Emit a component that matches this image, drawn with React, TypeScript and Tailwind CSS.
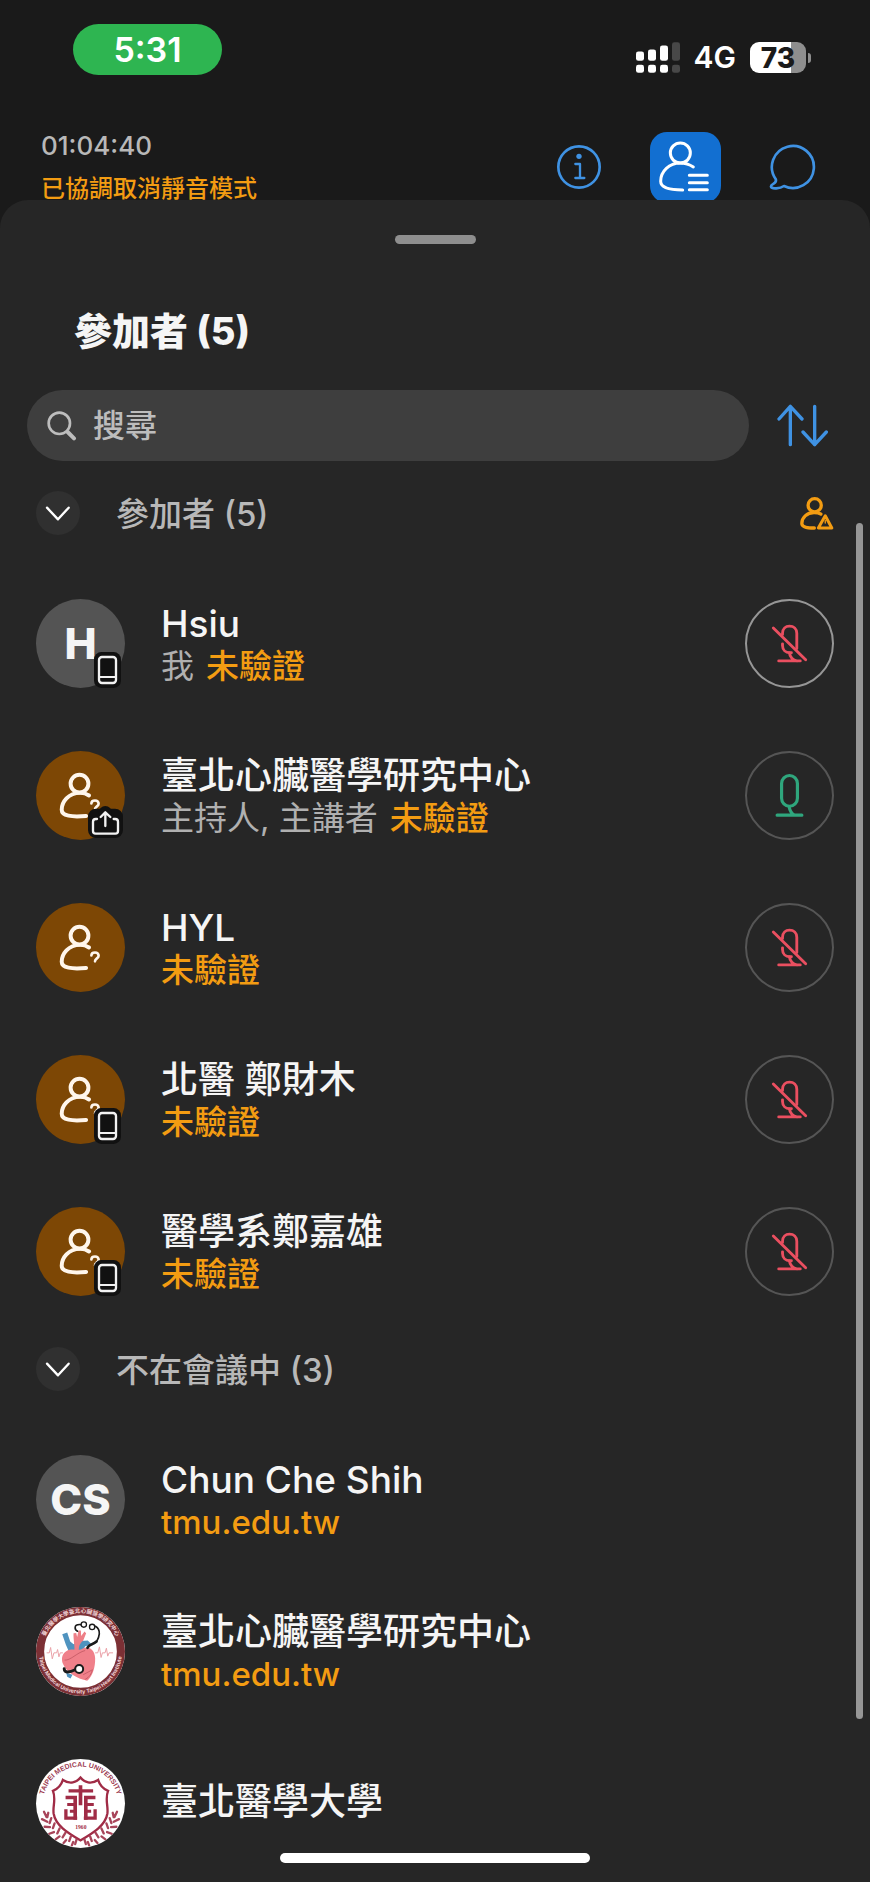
import type { ReactNode } from 'react';

type Badge = 'phone' | 'share';

type Person = {
  name: string;
  role?: string;
  tag?: string;
  avatar: ReactNode;
  badge?: Badge;
  mic?: 'muted' | 'on';
  self?: boolean;
};

const SignalIcon = () => (
  <svg viewBox="603 127 132 92" className="h-[31px] w-[44px]" fill="#fff">
    <rect x="603" y="155" width="24" height="28" rx="7" />
    <rect x="639" y="149" width="24" height="34" rx="7" />
    <rect x="675" y="137" width="24" height="46" rx="7" />
    <rect x="711" y="127" width="24" height="56" rx="7" fill="#484848" />
    <rect x="603" y="195" width="24" height="24" rx="7" />
    <rect x="639" y="195" width="24" height="24" rx="7" />
    <rect x="675" y="195" width="24" height="24" rx="7" />
    <rect x="711" y="195" width="24" height="24" rx="7" fill="#484848" />
  </svg>
);

const InfoIcon = () => (
  <svg viewBox="362 432 138 138" className="size-[46px]" fill="none" stroke="#3f92e3" strokeWidth="8" strokeLinecap="round" strokeLinejoin="round">
    <circle cx="431" cy="501" r="62" />
    <circle cx="431" cy="469" r="8" fill="#3f92e3" stroke="none" />
    <path d="M420 492h14v42M420 534h27" strokeWidth="7" />
  </svg>
);

const PeopleIcon = () => (
  <svg viewBox="0 0 213 213" className="size-full" fill="none" stroke="#fff" strokeWidth="9" strokeLinecap="round">
    <circle cx="91" cy="63" r="30" />
    <path d="M130 105C118 97 105 93 91 93C58 93 32 118 32 148C32 166 60 174 98 174" />
    <path d="M118 130h54M118 152h54M118 173h54" />
  </svg>
);

const ChatIcon = () => (
  <svg viewBox="1002 430 144 138" className="h-[46px] w-[48px]" fill="none" stroke="#3f92e3" strokeWidth="8" strokeLinejoin="round">
    <path d="M1047 556A63 63 0 1 0 1022 535C1028 551 1007 548 1008 558C1010 566 1035 564 1047 556Z" />
  </svg>
);

const SearchIcon = () => (
  <svg viewBox="141 423 90 90" className="size-[30px] shrink-0" fill="none" stroke="#bdbdbd" strokeLinecap="round">
    <circle cx="178" cy="460" r="32" strokeWidth="8" />
    <path d="M203 486L222 505" strokeWidth="12" />
  </svg>
);

const SortIcon = () => (
  <svg viewBox="1024 100 153 129" className="h-[43px] w-[51px]" fill="none" stroke="#3f92e3" strokeWidth="10" strokeLinecap="round" strokeLinejoin="round">
    <path d="M1064 222V107M1030 145L1064 107L1099 145" />
    <path d="M1137 107V222M1102 184L1137 222L1172 184" />
  </svg>
);

const WarnPersonIcon = () => (
  <svg viewBox="1096 377 102 100" className="h-[33px] w-[34px]" fill="none" stroke="#f39c12" strokeWidth="10" strokeLinecap="round" strokeLinejoin="round">
    <circle cx="1140" cy="402" r="20" />
    <path d="M1159 429C1153 425 1147 424 1138 424C1116 424 1101 440 1101 457C1101 468 1120 471 1139 471" />
    <path d="M1172 434L1192 471H1151Z" strokeWidth="9" />
    <path d="M1172 448v8" strokeWidth="4" />
  </svg>
);

const ChevronIcon = () => (
  <svg viewBox="0 0 132 132" className="size-full" fill="none" stroke="#fff" strokeWidth="7" strokeLinecap="round" strokeLinejoin="round">
    <path d="M33 50L66 85L98 50" />
  </svg>
);

const MutedMicIcon = () => (
  <svg viewBox="135 86 268 268" className="size-full" fill="none" stroke="#ea4f60" strokeWidth="9" strokeLinecap="round" strokeLinejoin="round">
    <path d="M247 192V188C247 173 257 165 269 165C282 165 292 174 292 188V236" />
    <path d="M247 221V226C247 240 257 249 270 249H275" />
    <path d="M269 250C270 262 280 273 292 275M235 275H303" />
    <path d="M218 171L320 271" />
  </svg>
);

const MicIcon = () => (
  <svg viewBox="135 542 268 268" className="size-full" fill="none" stroke="#2fa67d" strokeWidth="10" strokeLinecap="round" strokeLinejoin="round">
    <rect x="244" y="613" width="50" height="97" rx="25" />
    <path d="M268 712C270 724 276 733 285 738M230 738H308" />
  </svg>
);

const PhoneBadge = () => (
  <svg viewBox="0 0 81 108" className="absolute right-1 bottom-0 h-[36px] w-[27px]" fill="none">
    <rect width="81" height="108" rx="22" fill="#111" />
    <rect x="15" y="15" width="51" height="78" rx="9" stroke="#f2f2f2" strokeWidth="7" />
    <path d="M15 75H66" stroke="#f2f2f2" strokeWidth="6" />
  </svg>
);

const ShareBadge = () => (
  <svg viewBox="0 0 105 96" className="absolute right-0.5 bottom-0.5 h-[32px] w-[35px]" fill="none">
    <rect y="8" width="105" height="88" rx="24" fill="#111" />
    <circle cx="52" cy="20" r="20" fill="#111" />
    <g stroke="#f2f2f2" strokeWidth="7" strokeLinecap="round" strokeLinejoin="round">
      <path d="M27 39H23Q15 39 15 47V75Q15 83 23 83H82Q90 83 90 75V47Q90 39 82 39H77" />
      <path d="M52 60V20M38 33L52 19L67 33" />
    </g>
  </svg>
);

const Initials = ({ text }: { text: string }) => (
  <span className="flex size-full items-center justify-center rounded-full bg-[#545454] text-[43px] leading-none font-extrabold text-[#f5f5f5]">
    {text}
  </span>
);

const GuestAvatar = () => (
  <svg viewBox="0 0 270 270" className="size-full rounded-full bg-[#7d4705]" fill="none" stroke="#fff6ec" strokeWidth="12" strokeLinecap="round">
    <circle cx="132" cy="99" r="27" />
    <path d="M161 135C152 129 145 127 134 127C98 127 78 154 78 178C78 197 108 201 152 197" />
    <path d="M168 159C168 152 173 150 179 150C186 150 190 155 190 160C190 168 179 168 179 177" strokeWidth="8" />
  </svg>
);

const HeartAvatar = () => (
  <svg viewBox="48 50 268 268" className="size-full rounded-full bg-white" fill="none">
    <circle cx="182" cy="184" r="122" stroke="#7c3035" strokeWidth="25" />
    <path id="ring-top" d="M69 210A116 116 0 1 1 295 210" />
    <path id="ring-bottom" d="M60 158A125 125 0 1 0 304 158" />
    <g fontFamily="Inter, 'Noto Sans CJK TC', sans-serif" fontWeight="700" fill="#f0d3d5" textAnchor="middle">
      <text fontSize="17">
        <textPath href="#ring-top" startOffset="50%">臺北醫學大學臺北心臟醫學研究中心</textPath>
      </text>
      <text fontSize="16">
        <textPath href="#ring-bottom" startOffset="50%">Taipei Medical University Taipei Heart Institute</textPath>
      </text>
    </g>
    <path d="M80 188h8l4-16 5 34 5-18h8l3-10 4 22 4-12h8M226 188h8l5-18 5 32 4-14h8l4-14 4 24 4-10h12" stroke="#eaa2a8" strokeWidth="3" />
    <path d="M127 132L142 127L151 154L161 162L172 153L204 151L216 163L196 168L184 190L148 186L138 164Z" fill="#4f93bf" />
    <path d="M163 188C166 166 160 150 161 129L169 128L172 140L176 121H183L184 137L194 124L199 129L190 152C178 160 175 175 178 188Z" fill="#ee7f87" />
    <path d="M139 183C158 171 176 185 190 174C211 166 229 183 226 214C224 244 214 262 202 272C176 268 139 248 128 219C124 204 127 190 139 183Z" fill="#f0808a" />
    <path d="M134 210C153 211 170 188 196 181M190 254L216 240M196 268C209 262 216 250 218 238" stroke="#b84e5a" strokeWidth="2" />
    <path d="M139 248L158 254L152 265L142 260Z" fill="#4f93bf" />
    <g stroke="#1b1b1b" strokeLinecap="round">
      <path d="M183 103C160 101 164 118 173 123M227 108C246 119 238 142 230 155" strokeWidth="5" />
      <path d="M230 154C220 164 207 161 203 173" strokeWidth="8" />
      <path d="M133 236C133 250 151 246 166 239" strokeWidth="9" />
      <circle cx="192" cy="103" r="8" strokeWidth="4" fill="#fff" />
      <circle cx="217" cy="110" r="8" strokeWidth="4" fill="#fff" />
      <circle cx="178" cy="237" r="12" strokeWidth="6" fill="#fff" />
    </g>
  </svg>
);

const UniversityAvatar = () => (
  <svg viewBox="48 53 268 268" className="size-full rounded-full bg-white" fill="none">
    <path id="crest-top" d="M69 205A114 114 0 1 1 295 205" />
    <text fontSize="21" fontWeight="700" fontFamily="'Liberation Sans', sans-serif" fill="#9c3a50" textAnchor="middle">
      <textPath href="#crest-top" startOffset="50%">TAIPEI MEDICAL UNIVERSITY</textPath>
    </text>
    <path
      d="M182 109C170 124 150 130 129 116C124 132 114 143 99 149C109 173 98 194 101 217C107 254 145 276 182 298C219 276 257 254 263 217C266 194 255 173 265 149C250 143 240 132 235 116C214 130 194 124 182 109Z"
      stroke="#a02c46"
      strokeWidth="7"
    />
    {/* cross over the two facing halves of 北 */}
    <g stroke="#a02c46">
      <path d="M146 149H220" strokeWidth="10" />
      <path d="M182 132V192" strokeWidth="11" />
      <path d="M137 169H166V236M227 169H198V236" strokeWidth="11" />
      <path d="M142 190H166M222 190H198M150 210H166M198 210H214" strokeWidth="9" />
      <path d="M138 204V231H172M226 204V231H192" strokeWidth="10" />
    </g>
    <text x="183" y="265" fontSize="17" fontWeight="700" fontFamily="'Liberation Serif', serif" fill="#a02c46" textAnchor="middle">
      1960
    </text>
    <g stroke="#a8455a" strokeWidth="7" strokeLinecap="round">
      <path d="M72 212L80 228M66 234L82 242M74 257L90 258M88 278L102 273M107 295L119 286M131 306L139 297M156 313L160 303M85 215L82 228M94 231L89 246M104 247L99 261M119 262L112 277M137 275L128 289M153 286L148 300M170 296L166 309" />
      <path d="M292 212L284 228M298 234L282 242M290 257L274 258M276 278L262 273M257 295L245 286M233 306L225 297M208 313L204 303M279 215L282 228M270 231L275 246M260 247L265 261M245 262L252 277M227 275L236 289M211 286L216 300M194 296L198 309" />
    </g>
  </svg>
);

const attendees: Person[] = [
  { name: 'Hsiu', role: '我', tag: '未驗證', avatar: <Initials text="H" />, badge: 'phone', mic: 'muted', self: true },
  { name: '臺北心臟醫學研究中心', role: '主持人, 主講者', tag: '未驗證', avatar: <GuestAvatar />, badge: 'share', mic: 'on' },
  { name: 'HYL', tag: '未驗證', avatar: <GuestAvatar />, mic: 'muted' },
  { name: '北醫 鄭財木', tag: '未驗證', avatar: <GuestAvatar />, badge: 'phone', mic: 'muted' },
  { name: '醫學系鄭嘉雄', tag: '未驗證', avatar: <GuestAvatar />, badge: 'phone', mic: 'muted' },
];

const absentees: Person[] = [
  { name: 'Chun Che Shih', tag: 'tmu.edu.tw', avatar: <Initials text="CS" /> },
  { name: '臺北心臟醫學研究中心', tag: 'tmu.edu.tw', avatar: <HeartAvatar /> },
  { name: '臺北醫學大學', avatar: <UniversityAvatar /> },
];

const PersonRow = ({ person }: { person: Person }) => (
  <li className="flex h-[90px] items-center">
    <div className="relative size-[89px] shrink-0">
      {person.avatar}
      {person.badge === 'phone' && <PhoneBadge />}
      {person.badge === 'share' && <ShareBadge />}
    </div>
    <div className={`ml-9 min-w-0 flex-1 ${person.tag ? 'pt-1' : 'pb-1'}`}>
      <p className="truncate text-[37px] leading-[43px] font-medium text-[#f5f5f5]">{person.name}</p>
      {person.tag && (
        <p className="flex gap-3 text-[33px] leading-[43px]">
          {person.role && <span className="text-[#b0b0b0]">{person.role}</span>}
          <span className="font-medium text-[#f39c12]">{person.tag}</span>
        </p>
      )}
    </div>
    {person.mic && (
      <button
        type="button"
        aria-label={person.mic === 'on' ? '靜音' : '取消靜音'}
        className={`size-[89px] shrink-0 rounded-full border-2 ${person.self ? 'border-[#969696]' : 'border-[#555]'}`}
      >
        {person.mic === 'on' ? <MicIcon /> : <MutedMicIcon />}
      </button>
    )}
  </li>
);

const SectionHeader = ({ title, action }: { title: string; action?: ReactNode }) => (
  <div className="mb-[63px] flex h-11 items-center">
    <button type="button" aria-label={title} className="size-11 rounded-full bg-[#303030]">
      <ChevronIcon />
    </button>
    <h2 className="ml-9 flex-1 pt-0.5 text-[33px] leading-11 font-medium text-[#b8b8b8]">{title}</h2>
    {action}
  </div>
);

const App = () => {
  return (
    <div className="flex min-h-screen flex-col bg-[#1a1a1a] font-[Inter,'Noto_Sans_CJK_TC',sans-serif]">
      <div className="flex items-start justify-between pt-6 pr-[59px] pl-[73px]">
        <div className="flex h-[51px] w-[149px] items-center justify-center rounded-full bg-[#2eb551] text-[34px] font-semibold text-white">
          5:31
        </div>
        <div className="mt-[18px] flex h-[31px] items-center">
          <SignalIcon />
          <span className="mx-3.5 text-[30px] leading-[31px] font-semibold text-white">4G</span>
          <span className="flex h-[31px] w-[56px] items-center justify-center rounded-[9px] bg-linear-to-r from-white from-73% to-[#8e8e8e] to-73% text-[28px] leading-none font-extrabold text-[#1a1a1a]">
            73
          </span>
          <span className="ml-0.5 h-2.5 w-[3px] rounded-r-full bg-[#8e8e8e]" />
        </div>
      </div>

      <header className="mt-[57px] flex h-[68px] items-start justify-between pr-[53px] pl-[41px]">
        <div>
          <p className="text-[26px] leading-[28px] font-medium text-[#b8b8b8]">01:04:40</p>
          <p className="mt-[15px] text-[24px] leading-[28px] font-medium text-[#f39c12]">已協調取消靜音模式</p>
        </div>
        <nav className="flex items-start">
          <button type="button" aria-label="資訊" className="mt-3">
            <InfoIcon />
          </button>
          <button type="button" aria-label="參加者" className="ml-12 size-[71px] rounded-[17px] bg-[#126fd1]">
            <PeopleIcon />
          </button>
          <button type="button" aria-label="聊天" className="mt-3 ml-12">
            <ChatIcon />
          </button>
        </nav>
      </header>

      <main className="relative flex-1 rounded-t-[28px] bg-[#262626] pt-[35px]">
        <div className="mx-auto h-[9px] w-[81px] rounded-full bg-[#8e8e8e]" />

        <h1 className="mt-[65px] pl-[74px] text-[38px] leading-11 font-extrabold text-[#f5f5f5]">參加者 (5)</h1>

        <div className="mt-[37px] flex items-center pr-[42px] pl-[27px]">
          <label className="flex h-[71px] min-w-0 flex-1 items-center gap-4 rounded-full bg-[#3e3e3e] pr-6 pl-5">
            <SearchIcon />
            <input
              type="search"
              aria-label="搜尋"
              placeholder="搜尋"
              className="min-w-0 flex-1 bg-transparent text-[32px] leading-11 font-medium text-[#f5f5f5] outline-none placeholder:text-[#bdbdbd]"
            />
          </label>
          <button type="button" aria-label="排序" className="ml-7">
            <SortIcon />
          </button>
        </div>

        <section className="mt-[30px] px-9">
          <SectionHeader title="參加者 (5)" action={<WarnPersonIcon />} />
          <ul className="flex flex-col gap-[62px]">
            {attendees.map((person) => (
              <PersonRow key={person.name} person={person} />
            ))}
          </ul>
        </section>

        <section className="mt-[51px] px-9">
          <SectionHeader title="不在會議中 (3)" />
          <ul className="flex flex-col gap-[62px]">
            {absentees.map((person) => (
              <PersonRow key={person.name} person={person} />
            ))}
          </ul>
        </section>

        <div className="mx-auto mt-[5px] mb-[19px] h-2.5 w-[310px] rounded-full bg-white" />

        {/* scroll indicator */}
        <div className="absolute top-[323px] right-[7px] bottom-[163px] w-[7px] rounded-full bg-[#969696]" />
      </main>
    </div>
  );
};

export default App;
